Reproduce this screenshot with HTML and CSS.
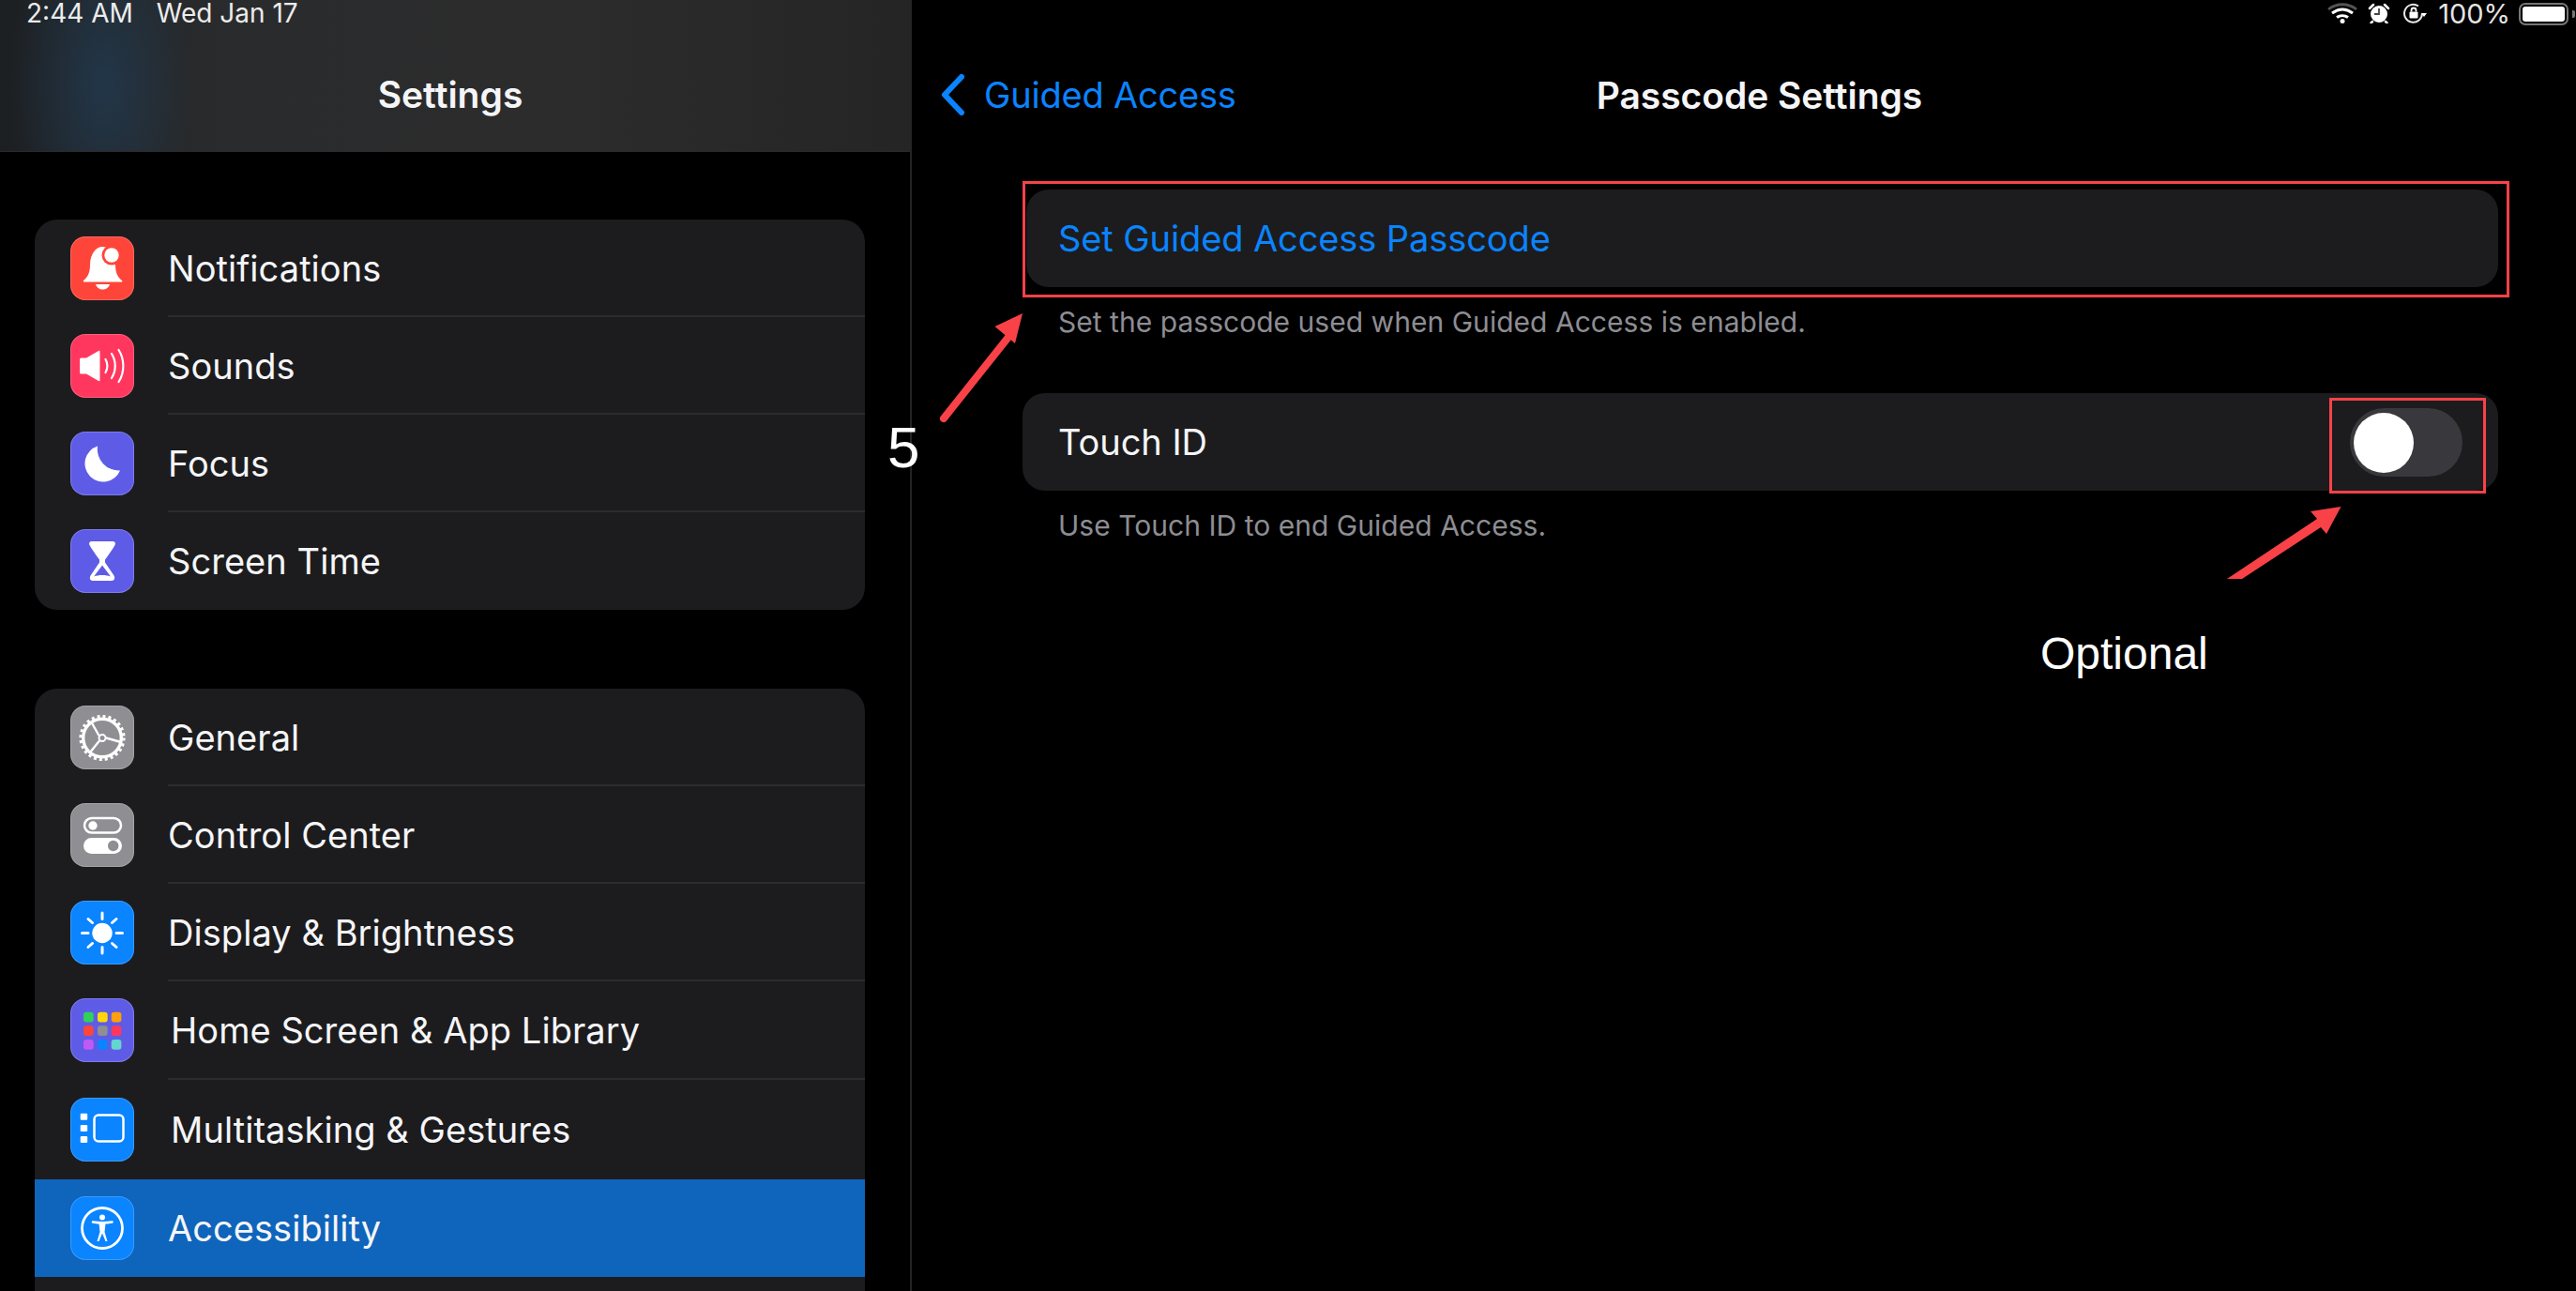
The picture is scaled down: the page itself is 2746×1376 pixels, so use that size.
FILE: index.html
```html
<!DOCTYPE html>
<html lang="en">
<head>
<meta charset="utf-8">
<title>Passcode Settings</title>
<link rel="stylesheet" href="styles.css">
</head>
<body>
<div class="screen">
  <aside class="sidebar">
    <header class="side-head">
      <div class="status-left"><span>2:44 AM</span><span>Wed Jan 17</span></div>
      <h1 class="side-title">Settings</h1>
    </header>
    <ul class="group group-first">
      <li class="row"><svg class="icon red" viewBox="0 0 68 68"><path class="w" d="M14 47C19 43 21 38 21 30C21 18 28 11 34 11C41 11 48 18 48 30C48 38 50 43 55 47C56 48 55 48.500 54 48.500H15C14 48.500 13.500 48 14 47Z"/><path class="w" d="M27 51H42C41 54.500 38 56.500 34.500 56.500C31 56.500 28 54.500 27 51Z"/><circle class="redfill" cx="44" cy="20" r="10.500"/><circle class="w" cx="44" cy="20" r="7.700"/></svg><div class="label">Notifications</div></li>
      <li class="row"><svg class="icon pink" viewBox="0 0 68 68"><path class="w" d="M10 27C10 26 11 25.500 12 25.500H17L30 18C31 17.500 31.500 18 31.500 19V49C31.500 50 31 50.500 30 50L17 42.500H12C11 42.500 10 42 10 41Z"/><g class="arc"><path d="M37.500 27C40 31 40 37 37.500 41"/><path d="M44 21C49 29 49 39 44 47"/><path d="M51.500 17C58 27 58 41 51.500 51"/></g></svg><div class="label">Sounds</div></li>
      <li class="row"><svg class="icon purple" viewBox="0 0 68 68"><path class="w" d="M29 15.500A19.500 19.500 0 1 0 53 41.500A23 23 0 0 1 29 15.500Z"/></svg><div class="label">Focus</div></li>
      <li class="row"><svg class="icon indigo" viewBox="0 0 68 68"><path class="w" d="M23 13H45C47.500 13 48.500 15 47.500 17C46 20 41 27 37 32.500V35.500L46.500 49.500C48 52 47 55 44 55H24C21 55 20 52 21.500 49.500L31 35.500V32.500C27 27 22 20 20.500 17C19.500 15 20.500 13 23 13Z"/><path class="indigo-fill" d="M34 38.500L43 50.500C38 48.500 30 48.500 25 50.500Z"/></svg><div class="label">Screen Time</div></li>
    </ul>
    <ul class="group">
      <li class="row"><svg class="icon gray" viewBox="0 0 68 68"><circle class="teeth" cx="34" cy="34.500" r="22.800"/><circle class="ring ring-gear" cx="34" cy="34.500" r="20.300"/><path class="spoke" d="M30.500 32L22 17M38 34.500L54 39M31 37.500L21 50"/><circle class="hub" cx="34" cy="34.500" r="3.500"/></svg><div class="label">General</div></li>
      <li class="row"><svg class="icon gray" viewBox="0 0 68 68"><rect class="tog" x="15" y="16" width="39" height="15.500" rx="7.700"/><circle class="w" cx="24" cy="24" r="4.700"/><rect class="w" x="14" y="37" width="41" height="17" rx="8.500"/><circle class="gray-fill" cx="45.700" cy="45.500" r="5.700"/></svg><div class="label">Control Center</div></li>
      <li class="row"><svg class="icon blue" viewBox="0 0 68 68"><circle class="w" cx="34" cy="34.500" r="10.700"/><path class="ray" d="M34 13V19.500M34 49.500V56M12.500 34.500H19M49 34.500H55.500M19 19.500L23.500 23.500M44.500 45.500L49 49.500M49 19.500L44.500 23.500M23.500 45.500L19 49.500"/></svg><div class="label">Display &amp; Brightness</div></li>
      <li class="row tall"><svg class="icon purple" viewBox="0 0 68 68"><rect class="c1" x="14" y="14.700" width="10.700" height="10.700" rx="3"/><rect class="c2" x="29" y="14.700" width="10.700" height="10.700" rx="3"/><rect class="c3" x="43.700" y="14.700" width="10.700" height="10.700" rx="3"/><rect class="c4" x="14" y="29.300" width="10.700" height="10.700" rx="3"/><rect class="c5" x="29" y="29.300" width="10.700" height="10.700" rx="3"/><rect class="c6" x="43.700" y="29.300" width="10.700" height="10.700" rx="3"/><rect class="c7" x="14" y="44" width="10.700" height="10.700" rx="3"/><rect class="c8" x="29" y="44" width="10.700" height="10.700" rx="3"/><rect class="c9" x="43.700" y="44" width="10.700" height="10.700" rx="3"/></svg><div class="label shift">Home Screen &amp; App Library</div></li>
      <li class="row tall"><svg class="icon blue" viewBox="0 0 68 68"><rect class="w" x="10.700" y="16.700" width="7.500" height="7" rx="1"/><rect class="w" x="10.700" y="29" width="7.500" height="7" rx="1"/><rect class="w" x="10.700" y="41" width="7.500" height="7" rx="1"/><rect class="tog" x="25.500" y="18.500" width="31" height="28" rx="4.500"/></svg><div class="label shift">Multitasking &amp; Gestures</div></li>
      <li class="row selected"><svg class="icon blue" viewBox="0 0 68 68"><circle class="ring" cx="34" cy="34" r="21.500"/><circle class="w" cx="34" cy="22.500" r="3"/><path class="limb" d="M24 27.500C30 28.500 38 28.500 44.500 27.500"/><path class="w" d="M30.500 29H37.500L36.500 38L39.500 48H37.500L34 39.500L30.500 48H28.500L31.500 38Z"/></svg><div class="label">Accessibility</div></li>
      <li class="row"></li>
    </ul>
  </aside>

  <main class="detail">
    <div class="status-right">
      <svg class="st-wifi" viewBox="0 0 32 22"><path class="wifi-dim" d="M1 7C10 0 22 0 31 7"/><path class="wifi-arc" d="M5 11C12 6 20 6 27 11M10 15.500C13.500 13 18.500 13 22 15.500"/><circle class="w" cx="16" cy="19.500" r="2.500"/></svg>
      <svg class="st-alarm" viewBox="0 0 24 22"><circle class="w" cx="12" cy="12" r="9"/><path class="alarm-hand" d="M12 6V12H7"/><path class="alarm-bell" d="M2 6L6 2M22 6L18 2M5 20L3.500 21.500M19 20L20.500 21.500"/></svg>
      <svg class="st-rot" viewBox="0 0 26 22"><path class="rot-arc" d="M21 11A9.500 9.500 0 1 1 17 3.500"/><path class="w" d="M20 11H26L23 15Z"/><rect class="w" x="7.500" y="9.500" width="9" height="7" rx="1"/><path class="rot-lock" d="M9.500 9.500V8A2.500 2.500 0 0 1 14.500 8V9.500"/></svg>
      <span class="st-pct">100%</span>
      <div class="battery"><div class="battery-fill"></div></div>
      <div class="battery-nub"></div>
    </div>
    <nav class="nav">
      <a class="back"><svg class="chevron" viewBox="0 0 27 44"><path d="M23 3L5 22L23 41"/></svg><span>Guided Access</span></a>
      <h2 class="nav-title">Passcode Settings</h2>
    </nav>
    <section class="card card-first"><span class="link">Set Guided Access Passcode</span></section>
    <p class="note">Set the passcode used when Guided Access is enabled.</p>
    <section class="card card-second"><span class="card-text">Touch ID</span>
      <div class="switch"><div class="knob"></div></div>
    </section>
    <p class="note">Use Touch ID to end Guided Access.</p>
  </main>
</div>

<div class="mark mark-pass"></div>
<div class="mark mark-switch"></div>
<svg class="arrows" viewBox="0 0 2746 1376">
  <path class="arrow-line" d="M1006 446L1076 358"/>
  <path class="arrow-head" d="M1090 334L1060.500 348L1082 366Z"/>
  <path class="arrow-head" d="M2374 617H2390L2474 562L2480 569L2495.500 540L2463 545L2470 553Z"/>
</svg>
<div class="callout callout-five">5</div>
<div class="callout callout-opt">Optional</div>
</body>
</html>
```
FILE: styles.css
```css
* { box-sizing: border-box; }
html, body { margin: 0; padding: 0; background: #000; }
body { position: relative; width: 2746px; height: 1376px; overflow: hidden; font-family: Inter, "Liberation Sans", sans-serif; color: #f5f5f7; }
ul { list-style: none; margin: 0; padding: 0; }
h1, h2, p { margin: 0; }
.screen { display: flex; width: 2746px; height: 1376px; }

.sidebar { width: 972px; height: 1376px; flex: none; overflow: hidden; border-right: 2px solid #242426; padding-bottom: 0; }
.side-head { height: 162px; padding: 1px 0 0 28px; border-bottom: 1px solid #2a2a2c; background:
  radial-gradient(ellipse 100px 190px at 110px 90px, rgba(34,60,84,.75), rgba(34,60,84,0) 100%),
  linear-gradient(90deg, #1c1f22 0, #2a2b2c 240px, #2c2c2d 600px, #252525 970px); position: relative; }
.status-left { display: flex; gap: 25px; height: 27px; align-items: center; font-size: 28px; line-height: 27px; color: #ececec; }
.side-title { font-size: 39px; font-weight: 600; line-height: 48px; text-align: center; margin: 49px 0 0 -38px; }

.group { margin: 83.5px 48px 0 37px; background: #1c1c1e; border-radius: 24px; overflow: hidden; }
.group-first { margin-top: 72px; }
.row { height: 104px; display: flex; align-items: center; padding-left: 38px; gap: 36px; }
.row.tall { height: 105.5px; }
.row.selected { background: #0f64bb; }
.label { flex: 1; align-self: stretch; display: flex; align-items: center; font-size: 38px; letter-spacing: 0.05px; }
.row + .row .label { border-top: 2px solid #2c2c2e; margin-top: -2px; }
.row.selected .label, .row.selected + .row .label { border-top: 0; margin-top: 0; }
.label.shift { padding-left: 3px; }

.icon { width: 68px; height: 68px; flex: none; border-radius: 16px; box-shadow: inset 0 0 0 1px rgba(255,255,255,.2); }
.red { background: #ff453a; }
.pink { background: #ff375f; }
.purple { background: #5e5ce6; }
.indigo { background: #5e5ce6; }
.gray { background: #8e8e93; }
.blue { background: #0a84ff; }
.w { fill: #fff; }
.redfill { fill: #ff453a; }
.indigo-fill { fill: #5e5ce6; }
.gray-fill { fill: #8e8e93; }
.arc path { fill: none; stroke: #fff; stroke-width: 2.2; stroke-linecap: round; }
.teeth { fill: none; stroke: #fff; stroke-width: 3.6; stroke-dasharray: 2.98 2.98; }
.ring { fill: none; stroke: #fff; stroke-width: 2.8; }
.ring-gear { stroke-width: 3.4; }
.spoke { fill: none; stroke: #fff; stroke-width: 2.4; }
.hub { fill: #8e8e93; stroke: #fff; stroke-width: 2; }
.tog { fill: none; stroke: #fff; stroke-width: 2.5; }
.ray { fill: none; stroke: #fff; stroke-width: 3; stroke-linecap: round; }
.limb { fill: none; stroke: #fff; stroke-width: 2.6; stroke-linecap: round; }
.c1 { fill: #30d158; } .c2 { fill: #ffd60a; } .c3 { fill: #ff9f0a; }
.c4 { fill: #ff453a; } .c5 { fill: #8e8e93; } .c6 { fill: #ff375f; }
.c7 { fill: #bf5af2; } .c8 { fill: #0a84ff; } .c9 { fill: #66d4cf; }

.detail { flex: 1; min-width: 0; padding: 0 83px 0 118px; }
.status-right { height: 27px; margin-right: -83px; display: flex; align-items: flex-start; justify-content: flex-end; padding-top: 3px; }
.status-right svg { display: block; height: 22px; }
.st-wifi { width: 32px; margin-right: 11px; }
.st-alarm { width: 24px; margin-right: 13px; }
.st-rot { width: 26px; margin-right: 12px; }
.wifi-dim { fill: none; stroke: #555; stroke-width: 2.8; }
.wifi-arc { fill: none; stroke: #fff; stroke-width: 3; }
.alarm-hand { fill: none; stroke: #444; stroke-width: 1.800; }
.alarm-bell { fill: none; stroke: #fff; stroke-width: 2.500; stroke-linecap: round; }
.rot-arc { fill: none; stroke: #e6e6e6; stroke-width: 2; }
.rot-lock { fill: none; stroke: #fff; stroke-width: 1.800; }
.st-pct { font-size: 29px; line-height: 24px; margin-right: 9px; color: #e4e4e4; }
.battery { width: 53px; height: 24px; border: 2px solid #767676; border-radius: 7px; padding: 2px; }
.battery-fill { height: 100%; background: #fff; border-radius: 3px; }
.battery-nub { width: 3px; height: 8px; margin: 8px 1px 0 4px; background: #767676; border-radius: 0 2px 2px 0; }

.nav { display: flex; align-items: center; height: 148px; margin-left: -88px; }
.back { display: flex; align-items: center; gap: 20px; color: #0a84ff; font-size: 38px; letter-spacing: -0.2px; }
.chevron { width: 27px; height: 44px; }
.chevron path { fill: none; stroke: #0a84ff; stroke-width: 6; stroke-linecap: round; stroke-linejoin: round; }
.nav-title { font-size: 39px; font-weight: 600; margin-left: 384px; letter-spacing: -0.05px; }

.card { background: #1c1c1e; border-radius: 24px; height: 104px; display: flex; align-items: center; font-size: 38px; }
.card-first { margin: 27px 0 0 4px; padding-left: 34px; letter-spacing: -0.1px; }
.card-second { padding-left: 38px; justify-content: space-between; padding-right: 38px; letter-spacing: -0.05px; }
.link { color: #0a84ff; }
.note { font-size: 30px; line-height: 36px; color: #8d8d93; padding-left: 38px; margin-top: 19px; margin-bottom: 58px; letter-spacing: 0.03px; }
.switch { width: 120px; height: 73px; border-radius: 37px; background: #39393d; padding: 5px 4px; }
.knob { width: 64px; height: 64px; border-radius: 50%; background: #fff; }

.mark { position: absolute; border: 3px solid #f84248; }
.mark-pass { left: 1090px; top: 193px; width: 1585px; height: 124px; }
.mark-switch { left: 2483px; top: 424px; width: 167px; height: 102px; }
.arrows { position: absolute; left: 0; top: 0; width: 2746px; height: 1376px; pointer-events: none; }
.arrow-line { fill: none; stroke: #f84248; stroke-width: 8; stroke-linecap: round; }
.arrow-head { fill: #f84248; }
.callout { position: absolute; font-family: "Liberation Sans", Arial, sans-serif; color: #fff; line-height: 1; }
.callout-five { left: 946px; top: 446px; font-size: 62px; }
.callout-opt { left: 2175px; top: 673px; font-size: 48px; }
```
